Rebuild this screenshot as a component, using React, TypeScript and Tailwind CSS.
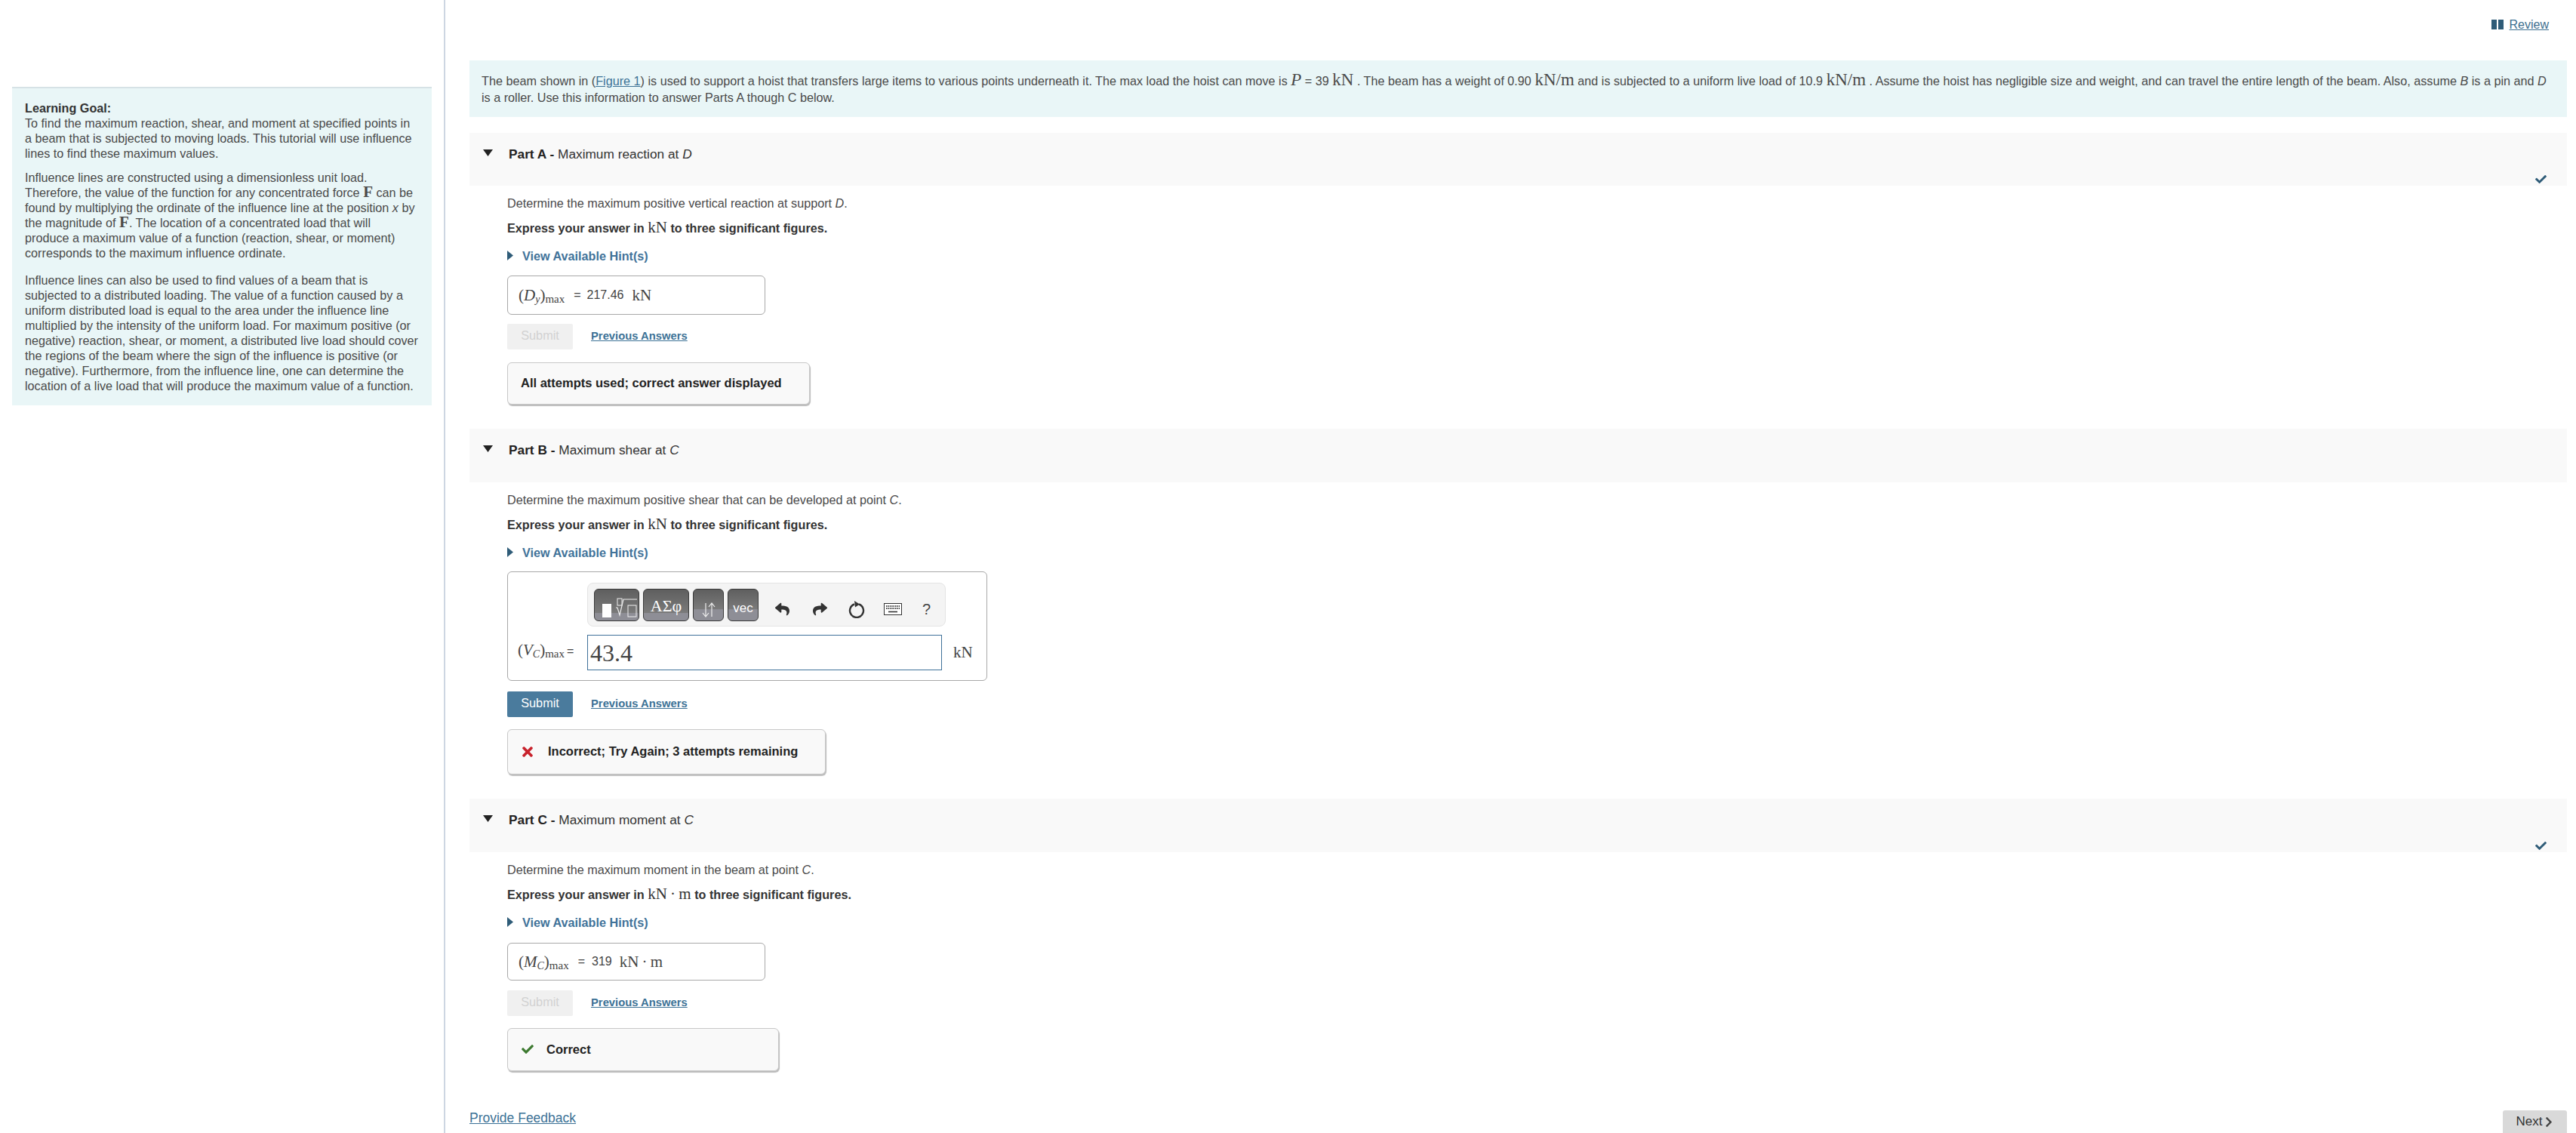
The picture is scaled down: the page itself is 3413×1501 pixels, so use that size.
import React from "react";
import { FaCheck, FaTimes, FaReply, FaShare, FaChevronRight } from "react-icons/fa";

const M = ({ children, className = "" }: { children: React.ReactNode; className?: string }) => (
  <span className={"font-['Liberation_Serif',serif] " + className}>{children}</span>
);
const I = ({ children }: { children: React.ReactNode }) => <i>{children}</i>;

function Label({ v, s }: { v: string; s: string }) {
  return (
    <M className="text-[21px] leading-none text-[#444]">
      (<i>{v}</i>
      <span className="text-[14px] italic relative top-[3px]">{s}</span>)
      <span className="text-[15px] relative top-[3px]">max</span>
    </M>
  );
}

function ToolBtn({ w, children, low }: { w: string; children: React.ReactNode; low?: boolean }) {
  return (
    <div
      className={
        w +
        " h-[43px] rounded-[6px] border border-[#3a3a3a] flex items-center justify-center text-white overflow-hidden " +
        (low
          ? "bg-[linear-gradient(#5f5f5f_0%,#7a7a7a_63%,#8e8e96_65%,#8e8e96_100%)]"
          : "bg-[linear-gradient(#5f5f5f_0%,#7a7a7a_75%,#8e8e96_77%,#8e8e96_100%)]")
      }
    >
      {children}
    </div>
  );
}

function Toolbar() {
  return (
    <div className="w-[475px] h-[58px] rounded-[8px] border border-[#e4e4e4] bg-[#f4f4f4] flex items-center pl-[8px]">
      <div className="flex gap-[5px]">
        <ToolBtn w="w-[60px]">
          <svg width="58" height="41" viewBox="0 0 58 41" fill="none">
            <rect x="10" y="19" width="12" height="18" fill="#fff" />
            <rect x="30" y="12" width="6" height="9" stroke="#eee" strokeWidth="1" />
            <path d="M28 24l2 0 3 10 5-21h18" stroke="#eee" strokeWidth="1.200" />
            <rect x="44" y="21" width="11" height="15" stroke="#eee" strokeWidth="1" />
          </svg>
        </ToolBtn>
        <ToolBtn w="w-[61px]">
          <M className="text-[22px] leading-none mt-[4px]">ΑΣφ</M>
        </ToolBtn>
        <ToolBtn w="w-[41px]" low>
          <svg className="mt-[13px]" width="22" height="22" viewBox="0 0 22 22" fill="none" stroke="#eee" strokeWidth="1.200">
            <path d="M7 2v17M3 15l4 5 4-5" />
            <path d="M15 20V3M11 7l4-5 4 5" />
          </svg>
        </ToolBtn>
        <ToolBtn w="w-[41px]" low>
          <span className="text-[17px] leading-none mt-[9px]">vec</span>
        </ToolBtn>
      </div>
      <div className="flex items-center text-[#333] ml-[22px] mt-[12px]">
        <FaReply className="w-[19px] h-[20px]" />
        <FaShare className="w-[19px] h-[20px] ml-[31px]" />
        <svg className="ml-[28px]" width="22" height="24" viewBox="0 0 22 24" fill="none">
          <path d="M8 5.500a9 9 0 1 0 6 0" stroke="#333" strokeWidth="2.400" />
          <path d="M8 1l7 4.500-6 4z" fill="#333" />
        </svg>
        <svg className="ml-[25px]" width="24" height="16" viewBox="0 0 24 16" fill="none">
          <rect x="0.500" y="0.500" width="23" height="15" fill="#fff" stroke="#333" />
          <path d="M3 4h18M3 7h18" stroke="#444" strokeWidth="2" strokeDasharray="1.400 1" />
          <path d="M6 11.500h12" stroke="#333" strokeWidth="1.600" />
        </svg>
        <span className="ml-[27px] text-[20px] text-[#444] leading-none font-['Liberation_Sans',sans-serif]">?</span>
      </div>
    </div>
  );
}

function Action({ active, mt }: { active?: boolean; mt: string }) {
  return (
    <div className={mt + " flex items-center h-[34px]"}>
      <div
        className={
          "w-[87px] h-[34px] pb-[3px] rounded-[2px] flex items-center justify-center text-[16.300px] " +
          (active ? "bg-[#4a7b9d] text-white font-medium" : "bg-[#f0f0f0] text-[#d2d2d2]")
        }
      >
        Submit
      </div>
      <a className="ml-[24px] text-[#3c7296] underline text-[14.800px] leading-[20px] -mt-[3px] font-bold">
        Previous Answers
      </a>
    </div>
  );
}

function Feedback({ w, h, mt, children }: { w: string; h: string; mt: string; children: React.ReactNode }) {
  return (
    <div
      className={
        w +
        " " +
        h +
        " " +
        mt +
        " pb-[1px] rounded-[6px] border border-[#c8c8c8] bg-[#f9f9f9] shadow-[1px_2px_1px_#bbb] flex items-center pl-[17px] text-[#222] font-bold text-[16.500px]"
      }
    >
      {children}
    </div>
  );
}

function Header({ name, children, done, h }: { name: string; children: React.ReactNode; done?: boolean; h: string }) {
  return (
    <div className={h + " bg-[#f9f9f9] flex justify-between pl-[18px] pr-[26px]"}>
      <div className="flex items-start pt-[18px] h-full">
        <svg className="mt-[4px]" width="13" height="9" viewBox="0 0 13 9">
          <path d="M0 0h13L6.500 9z" fill="#222" />
        </svg>
        <div className="ml-[21px] text-[#333] text-[17.300px] leading-[20px]">
          <b className="text-[#222]">{name} - </b>
          {children}
        </div>
      </div>
      {done && (
        <div className="flex items-end pb-[1px]">
          <FaCheck className="w-[17px] h-[15px] text-[#2f5c78]" />
        </div>
      )}
    </div>
  );
}

function Hint() {
  return (
    <div className="mt-[18px] h-[20px] flex items-center">
      <svg className="-mt-[4px]" width="8" height="13" viewBox="0 0 8 13">
        <path d="M0 0l8 6.500-8 6.500z" fill="#2f5c78" />
      </svg>
      <span className="ml-[12px] -mt-[2px] text-[#41739a] font-bold text-[16.200px]">View Available Hint(s)</span>
    </div>
  );
}

function Part({
  name,
  title,
  done,
  prompt,
  express,
  h,
  children,
}: {
  name: string;
  title: React.ReactNode;
  done?: boolean;
  prompt: React.ReactNode;
  express: React.ReactNode;
  h: string;
  children: React.ReactNode;
}) {
  return (
    <section className="mb-[32px]">
      <Header name={name} done={done} h={h}>
        {title}
      </Header>
      <div className="pl-[50px]">
        <p className="mt-[13px] text-[16.200px] leading-[20px] text-[#4a4a4a]">{prompt}</p>
        <p className="mt-[13px] text-[16.200px] leading-[20px] text-[#333] font-bold">
          Express your answer in <M className="font-normal text-[21px] leading-[0]">{express}</M> to three significant
          figures.
        </p>
        <Hint />
        {children}
      </div>
    </section>
  );
}

function AnswerBox({ w, h, mt, children }: { w: string; h: string; mt: string; children: React.ReactNode }) {
  return (
    <div className={w + " " + h + " " + mt + " rounded-[6px] border border-[#a8a8a8] flex items-center pl-[14px] text-[#444]"}>
      {children}
    </div>
  );
}

export default function App() {
  return (
    <div className="w-[3413px] h-[1501px] overflow-hidden bg-white flex font-['Liberation_Sans',Arial,sans-serif] text-[16px] text-[#444]">
      <aside className="w-[590px] shrink-0 border-r-2 border-[#cdd6e2] pl-[16px] pr-[16px] pt-[115px]">
        <div className="w-[556px] h-[422px] bg-[#e9f6f7] border-t-2 border-[#d6e2e6] pl-[17px] pr-[14px] pt-[16px] text-[16.200px] leading-[20px] text-[#4a4a4a]">
          <p>
            <b className="text-[#333]">Learning Goal:</b>
            <br />
            To find the maximum reaction, shear, and moment at specified points in
            <br />a beam that is subjected to moving loads. This tutorial will use influence lines to find these maximum
            values.
          </p>
          <p className="mt-[12px]">
            Influence lines are constructed using a dimensionless unit load. Therefore, the value of the function for
            any concentrated force <M className="font-bold text-[21px] leading-[0]">F</M> can be found by multiplying
            the ordinate of the influence line at the position <I>x</I> by the magnitude of{" "}
            <M className="font-bold text-[21px] leading-[0]">F</M>. The location of a concentrated load that will
            <br />
            produce a maximum value of a function (reaction, shear, or moment) corresponds to the maximum influence
            ordinate.
          </p>
          <p className="mt-[16px]">
            Influence lines can also be used to find values of a beam that is subjected to a distributed loading. The
            value of a function caused by a uniform distributed load is equal to the area under the influence line
            multiplied by the intensity of the uniform load. For maximum positive (or negative) reaction, shear, or
            moment, a distributed live load should cover the regions of the beam where the sign of the influence is
            positive (or negative). Furthermore, from the influence line, one can determine the location of a live load
            that will produce the maximum value of a function.
          </p>
        </div>
      </aside>

      <main className="flex-1 pl-[32px] pr-[12px] flex flex-col">
        <div className="h-[80px] flex justify-end pt-[23px] pr-[24px]">
          <a className="flex items-start text-[#3c6f90] text-[16px] leading-[20px]">
            <svg className="mt-[3px]" width="16" height="13" viewBox="0 0 16 13">
              <rect x="0" y="0" width="7" height="13" fill="#2f5c78" />
              <rect x="9" y="0" width="7" height="13" fill="#2f5c78" />
            </svg>
            <span className="ml-[8px] underline">Review</span>
          </a>
        </div>

        <div className="h-[75px] bg-[#e9f6f7] pl-[16px] pr-[20px] pt-[16px] text-[16.200px] leading-[22px] text-[#4a4a4a] mb-[21px]">
          The beam shown in (<a className="text-[#3c7296] underline">Figure 1</a>) is used to support a hoist that
          transfers large items to various points underneath it. The max load the hoist can move is{" "}
          <M className="text-[23px] leading-[0]">
            <i>P</i>
          </M>{" "}
          = 39 <M className="text-[23px] leading-[0]">kN</M> . The beam has a weight of 0.90{" "}
          <M className="text-[23px] leading-[0]">kN/m</M> and is subjected to a uniform live load of 10.9{" "}
          <M className="text-[23px] leading-[0]">kN/m</M> . Assume the hoist has negligible size and weight, and can
          travel the entire length of the beam. Also, assume <I>B</I> is a pin and <I>D</I> is a roller. Use this
          information to answer Parts A though C below.
        </div>

        <Part
          name="Part A"
          h="h-[70px]"
          title={
            <>
              Maximum reaction at <I>D</I>
            </>
          }
          done
          prompt={
            <>
              Determine the maximum positive vertical reaction at support <I>D</I>.
            </>
          }
          express="kN"
        >
          <AnswerBox w="w-[342px]" h="h-[52px]" mt="mt-[15px]">
            <Label v="D" s="y" />
            <span className="ml-[12px]">=</span>
            <span className="ml-[8px]">217.46</span>
            <M className="ml-[11px] text-[21px] leading-none">kN</M>
          </AnswerBox>
          <Action mt="mt-[12px]" />
          <Feedback w="w-[401px]" h="h-[56px]" mt="mt-[17px]">
            All attempts used; correct answer displayed
          </Feedback>
        </Part>

        <Part
          name="Part B"
          h="h-[71px]"
          title={
            <>
              Maximum shear at <I>C</I>
            </>
          }
          prompt={
            <>
              Determine the maximum positive shear that can be developed at point <I>C</I>.
            </>
          }
          express="kN"
        >
          <div className="w-[636px] h-[145px] mt-[14px] rounded-[6px] border border-[#a8a8a8] flex flex-col pt-[14px] pl-[105px]">
            <Toolbar />
            <div className="mt-[11px] flex items-center -ml-[92px]">
              <div className="w-[92px] whitespace-nowrap -mt-[3px]">
                <Label v="V" s="C" />
                <span className="ml-[3px]">=</span>
              </div>
              <div className="w-[470px] h-[47px] border border-[#3f7199] flex items-center pl-[3px] font-['Liberation_Serif',serif] text-[32px] text-[#444]">
                43.4
              </div>
              <M className="ml-[15px] text-[21px] leading-none">kN</M>
            </div>
          </div>
          <Action active mt="mt-[14px]" />
          <Feedback w="w-[422px]" h="h-[60px]" mt="mt-[16px]">
            <FaTimes className="w-[18px] h-[20px] text-[#c8222c]" />
            <span className="ml-[18px]">Incorrect; Try Again; 3 attempts remaining</span>
          </Feedback>
        </Part>

        <Part
          name="Part C"
          h="h-[71px]"
          title={
            <>
              Maximum moment at <I>C</I>
            </>
          }
          done
          prompt={
            <>
              Determine the maximum moment in the beam at point <I>C</I>.
            </>
          }
          express={"kN\u2009·\u2009m"}
        >
          <AnswerBox w="w-[342px]" h="h-[50px]" mt="mt-[16px]">
            <Label v="M" s="C" />
            <span className="ml-[12px]">=</span>
            <span className="ml-[9px]">319</span>
            <M className="ml-[10px] text-[21px] leading-none">{"kN\u2009·\u2009m"}</M>
          </AnswerBox>
          <Action mt="mt-[13px]" />
          <Feedback w="w-[360px]" h="h-[57px]" mt="mt-[16px]">
            <FaCheck className="w-[18px] h-[16px] text-[#3d7a30]" />
            <span className="ml-[16px]">Correct</span>
          </Feedback>
        </Part>

        <div className="flex-1 -mt-[32px] flex justify-between items-end">
          <a className="text-[#3c7296] underline text-[17.500px] leading-[20px] mb-[10px]">Provide Feedback</a>
          <div className="w-[85px] h-[30px] bg-[#d9d9d9] rounded-t-[3px] flex items-center justify-center text-[#333] text-[17px]">
            Next
            <FaChevronRight className="w-[12px] h-[15px] ml-[3px] text-[#444]" />
          </div>
        </div>
      </main>
    </div>
  );
}
